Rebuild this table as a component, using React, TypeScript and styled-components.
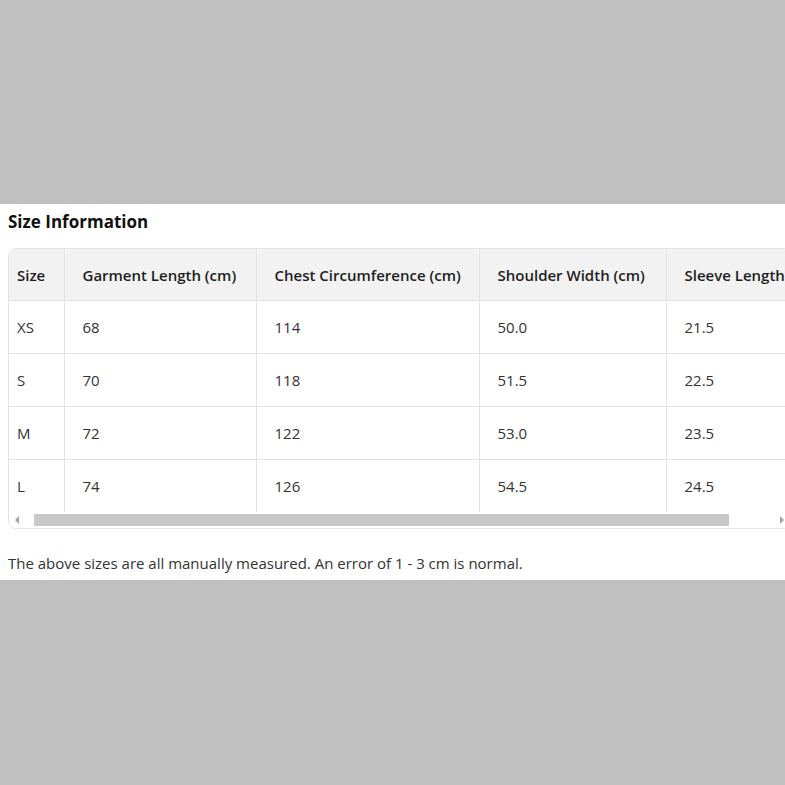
import React from "react";
import styled, { createGlobalStyle } from "styled-components";

const Global = createGlobalStyle`
  html, body { margin: 0; padding: 0; overflow: hidden; }
  body {
    background: #c0c0c0;
    font-family: "Open Sans", "Noto Sans", sans-serif;
  }
`;

const Page = styled.div`
  min-height: 785px;
  box-sizing: border-box;
  padding-bottom: 2px;
  display: flex;
  flex-direction: column;
  justify-content: center;
  overflow: hidden;
`;

const Panel = styled.section`
  background: #ffffff;
  padding: 6px 0 6px 8px;
  overflow: hidden;
`;

const Title = styled.h3`
  margin: 0 0 14px 0;
  font-size: 17px;
  line-height: 24px;
  font-weight: 700;
  color: #111;
`;

const TableWrap = styled.div`
  width: 781px;
  border: 1px solid #e4e4e4;
  border-radius: 8px;
  overflow: hidden;
`;

const Viewport = styled.div`
  overflow: hidden;
`;

const ScrollBar = styled.div`
  display: flex;
  height: 16px;
  background: #ffffff;
`;

const ScrollButton = styled.div<{ $dir: "left" | "right" }>`
  width: 25px;
  flex: none;
  display: flex;
  align-items: center;
  justify-content: ${(p) => (p.$dir === "left" ? "flex-start" : "flex-end")};
  padding: ${(p) => (p.$dir === "left" ? "0 0 0 6px" : "0 6px 0 0")};
  box-sizing: border-box;

  &::before {
    content: "";
    width: 0;
    height: 0;
    border-top: 4px solid transparent;
    border-bottom: 4px solid transparent;
    ${(p) =>
      p.$dir === "left"
        ? "border-right: 4px solid #a6a6a6;"
        : "border-left: 4px solid #a6a6a6;"}
  }
`;

const Track = styled.div`
  flex: 1;
  display: flex;
  align-items: center;
`;

const Thumb = styled.div`
  height: 12px;
  background: #c8c8c8;
`;

const Table = styled.table`
  border-collapse: collapse;
  table-layout: fixed;
  width: 821px;
  font-size: 15px;
`;

const HeadCell = styled.th<{ $first?: boolean }>`
  background: #f2f2f2;
  text-align: left;
  font-weight: 600;
  color: #1e1e1e;
  padding: 16px 18px 15px ${(p) => (p.$first ? "8px" : "18px")};
  line-height: 20px;
  border-right: 1px solid #e4e4e4;
  border-bottom: 1px solid #e4e4e4;
  white-space: nowrap;
  overflow: hidden;
`;

const Cell = styled.td<{ $first?: boolean }>`
  text-align: left;
  font-weight: 400;
  color: #333;
  padding: 16px 18px 16px ${(p) => (p.$first ? "8px" : "18px")};
  line-height: 20px;
  border-right: 1px solid #e4e4e4;
  border-bottom: 1px solid #e4e4e4;
  white-space: nowrap;
`;

const Row = styled.tr<{ $last?: boolean }>`
  & > td {
    border-bottom: ${(p) => (p.$last ? "none" : "1px solid #e4e4e4")};
  }
`;

const Note = styled.p`
  margin: 23px 0 0 0;
  font-size: 15px;
  line-height: 22px;
  color: #333;
`;

const widths = [55, 192, 223, 187, 164];
const headers = [
  "Size",
  "Garment Length (cm)",
  "Chest Circumference (cm)",
  "Shoulder Width (cm)",
  "Sleeve Length (cm)",
];
const rows = [
  ["XS", "68", "114", "50.0", "21.5"],
  ["S", "70", "118", "51.5", "22.5"],
  ["M", "72", "122", "53.0", "23.5"],
  ["L", "74", "126", "54.5", "24.5"],
];

const visibleWidth = 781;
const contentWidth = widths.reduce((a, b) => a + b, 0);
const trackWidth = visibleWidth - 50;

export default function App() {
  const thumbWidth = Math.round((trackWidth * visibleWidth) / contentWidth);
  return (
    <>
      <Global />
      <Page>
        <Panel>
          <Title>Size Information</Title>
          <TableWrap>
            <Viewport>
              <Table>
                <colgroup>
                  {widths.map((w, i) => (
                    <col key={i} style={{ width: w }} />
                  ))}
                </colgroup>
                <thead>
                  <tr>
                    {headers.map((h, i) => (
                      <HeadCell key={h} $first={i === 0}>
                        {h}
                      </HeadCell>
                    ))}
                  </tr>
                </thead>
                <tbody>
                  {rows.map((r, ri) => (
                    <Row key={r[0]} $last={ri === rows.length - 1}>
                      {r.map((c, ci) => (
                        <Cell key={ci} $first={ci === 0}>
                          {c}
                        </Cell>
                      ))}
                    </Row>
                  ))}
                </tbody>
              </Table>
            </Viewport>
            <ScrollBar>
              <ScrollButton $dir="left" />
              <Track>
                <Thumb style={{ width: thumbWidth }} />
              </Track>
              <ScrollButton $dir="right" />
            </ScrollBar>
          </TableWrap>
          <Note>
            The above sizes are all manually measured. An error of 1 - 3 cm is
            normal.
          </Note>
        </Panel>
      </Page>
    </>
  );
}
